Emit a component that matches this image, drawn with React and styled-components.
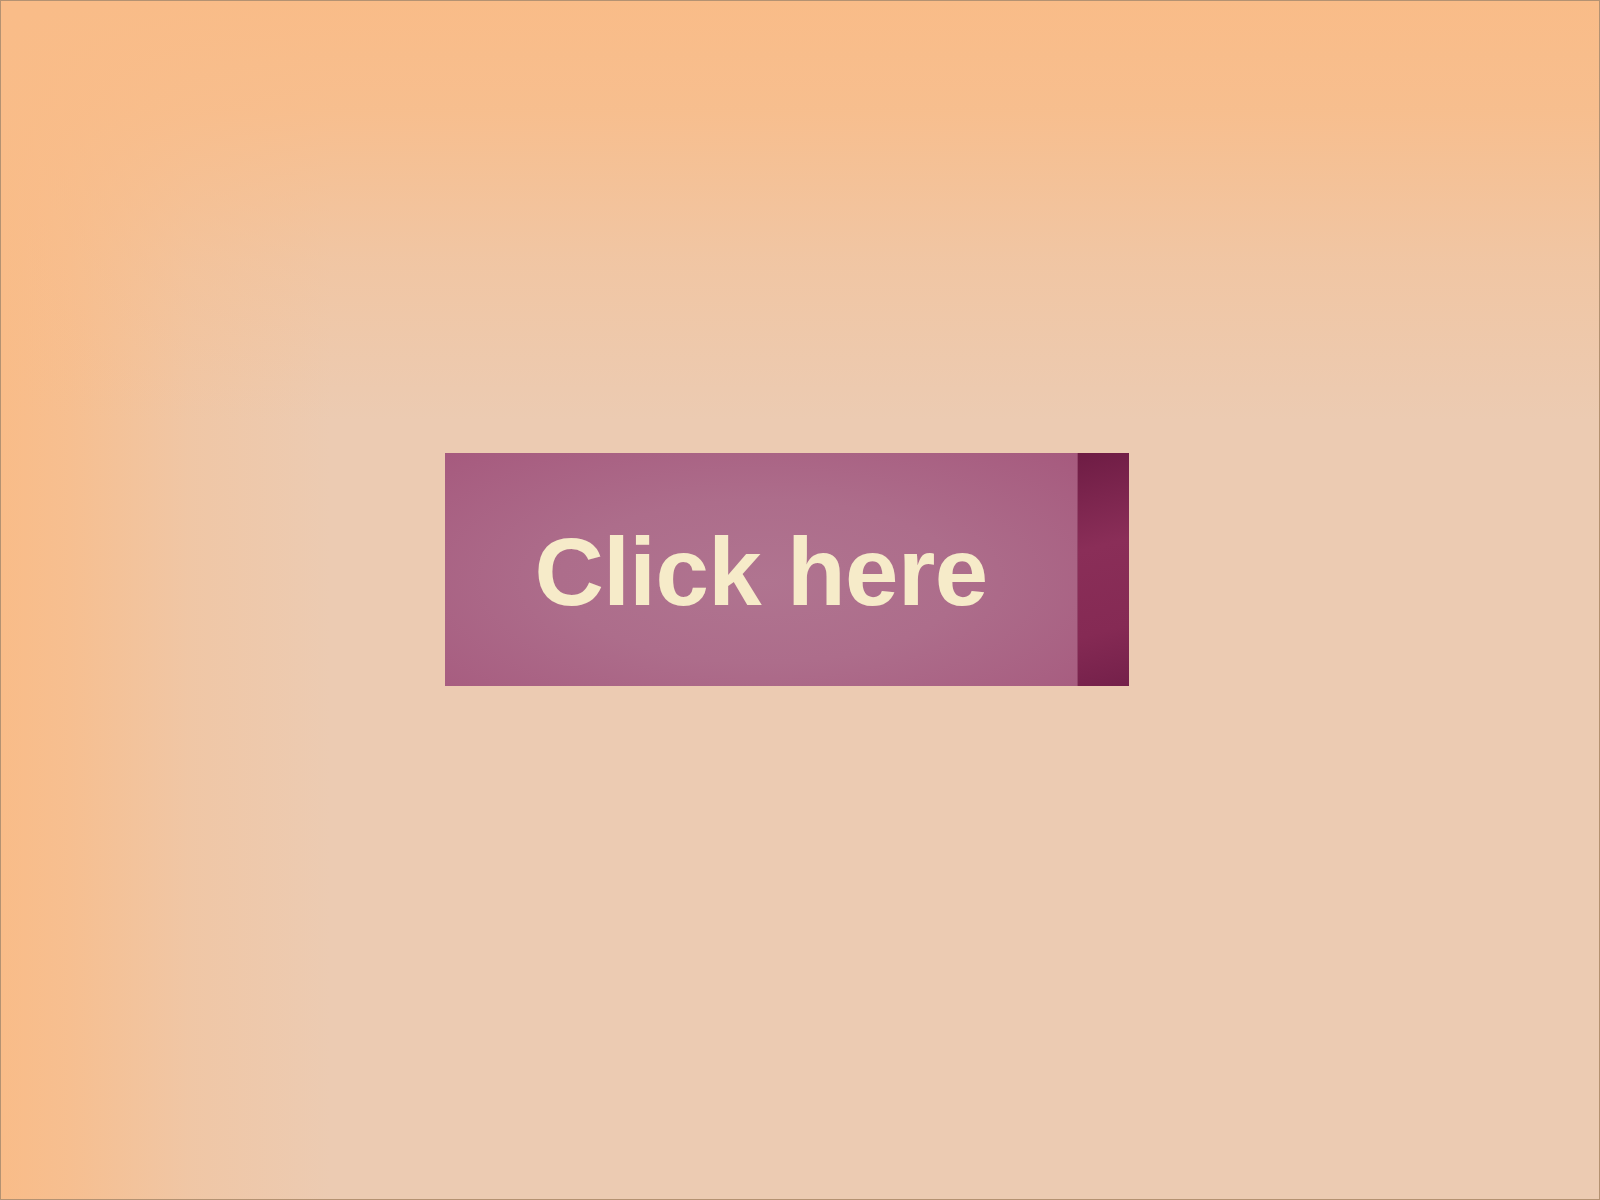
import styled, { createGlobalStyle } from "styled-components";

const GlobalStyle = createGlobalStyle`
  html, body {
    margin: 0;
    padding: 0;
  }
  body {
    font-family: "Liberation Sans", Arial, sans-serif;
  }
`;

// warm backdrop: orange along the top and left edges, fading to peach
const Page = styled.div`
  box-sizing: border-box;
  width: 1600px;
  height: 1200px;
  border: 1px solid #b49272;
  background:
    linear-gradient(
      to bottom,
      rgba(249, 188, 136, 1) 0px,
      rgba(249, 188, 136, 0.85) 110px,
      rgba(249, 188, 136, 0.35) 260px,
      rgba(249, 188, 136, 0) 420px
    ),
    linear-gradient(
      to right,
      rgba(249, 188, 136, 1) 0px,
      rgba(249, 188, 136, 0.8) 70px,
      rgba(249, 188, 136, 0.3) 190px,
      rgba(249, 188, 136, 0) 330px
    ),
    #eccbb2;
  display: flex;
  align-items: flex-start;
  padding: 452px 0 0 444px;
`;

const Button = styled.button`
  display: flex;
  width: 684px;
  height: 233px;
  padding: 0;
  border: none;
  cursor: pointer;
  background: none;
  font-family: inherit;
`;

const Face = styled.span`
  flex: 1;
  display: flex;
  align-items: center;
  justify-content: center;
  background: radial-gradient(
    ellipse at 50% 55%,
    #b07490 0%,
    #ad6d8b 45%,
    #a65a7e 100%
  );
  color: #f6ebc9;
  font-size: 96px;
  font-weight: 700;
  letter-spacing: -0.6px;
`;

const Label = styled.span`
  position: relative;
  top: 2px;
`;

const Edge = styled.span`
  width: 51px;
  border-left: 1px solid #93466a;
  background: linear-gradient(165deg, #6e1c44 0%, #8a2e58 40%, #852a54 75%, #74204a 100%);
`;

export default function App() {
  return (
    <>
      <GlobalStyle />
      <Page>
        <Button>
          <Face>
            <Label>Click here</Label>
          </Face>
          <Edge />
        </Button>
      </Page>
    </>
  );
}
